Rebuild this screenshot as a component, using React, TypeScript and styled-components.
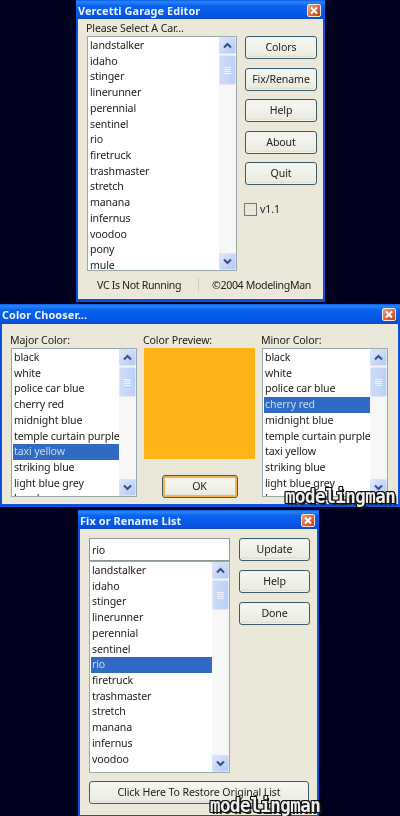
import React from "react";
import styled, { createGlobalStyle } from "styled-components";

const Global = createGlobalStyle`
  html, body { margin: 0; padding: 0; background: #00001f; }
  body { width: 400px; height: 816px; overflow: hidden; }
  * { box-sizing: border-box; }
`;

const Page = styled.div`
  position: relative;
  width: 400px;
  height: 816px;
  overflow: hidden;
  background: #00001f;
  font-family: "Noto Sans", "Liberation Sans", sans-serif;
  font-size: 10.6px;
  letter-spacing: -0.12px;
  color: #22221c;
  filter: blur(0.3px);
`;

const Win = styled.section<{ $left: number; $width: number; $height: number; $top: number }>`
  display: flex;
  flex-direction: column;
  margin-left: ${(p) => p.$left}px;
  margin-top: ${(p) => p.$top}px;
  width: ${(p) => p.$width}px;
  height: ${(p) => p.$height}px;
  background: #0a52dc;
  padding: 0 2px 3px;
`;

const TitleBar = styled.header<{ $h: number }>`
  display: flex;
  align-items: center;
  justify-content: space-between;
  flex: none;
  height: ${(p) => p.$h}px;
  margin: 0 -2px;
  padding: 1px 2px 0 2px;
  background: linear-gradient(#0a5ae6 0%, #2a86f8 10%, #0a62ee 30%, #0658e6 75%, #0a4ccc 100%);
  color: #eaf3ff;
  font-weight: 700;
  font-size: 10.9px;
  letter-spacing: 0.1px;
`;

const Close = styled.span`
  display: flex;
  flex: none;
  margin-right: 2px;
  width: 14px;
  height: 13px;
  border: 1px solid #f4e4dc;
  border-radius: 2px;
  background: linear-gradient(135deg, #f0a080, #d8582c 70%, #c8401c);
`;

const Client = styled.div<{ $pad: string }>`
  display: flex;
  flex-direction: column;
  flex: 1;
  min-height: 0;
  background: #ece8d9;
  padding: ${(p) => p.$pad};
`;

const Row = styled.div<{ $gap: number }>`
  display: flex;
  align-items: flex-start;
  gap: ${(p) => p.$gap}px;
`;

const Col = styled.div<{ $w?: number; $gap?: number; $align?: string }>`
  display: flex;
  flex-direction: column;
  flex: none;
  ${(p) => (p.$w ? `width: ${p.$w}px;` : "")}
  ${(p) => (p.$gap ? `gap: ${p.$gap}px;` : "")}
  ${(p) => (p.$align ? `align-items: ${p.$align};` : "")}
`;

const Label = styled.div`
  height: 15px;
  line-height: 14px;
  margin-left: -1px;
  white-space: nowrap;
`;

const ListBox = styled.div<{ $w: number; $h: number }>`
  display: flex;
  flex: none;
  width: ${(p) => p.$w}px;
  height: ${(p) => p.$h}px;
  background: #fff;
  border: 1px solid #98a8ac;
  overflow: hidden;
`;

const Items = styled.ul`
  flex: 1;
  min-width: 0;
  margin: 0;
  padding: 1px 0 0 1px;
  list-style: none;
  overflow: hidden;
`;

const Item = styled.li<{ $sel?: boolean }>`
  height: 15.72px;
  line-height: 15.72px;
  padding-left: 1px;
  white-space: nowrap;
  background: ${(p) => (p.$sel ? "#316ac5" : "transparent")};
  color: ${(p) => (p.$sel ? "#c8d8ee" : "#22221c")};
`;

const Scroll = styled.div`
  display: flex;
  flex-direction: column;
  flex: none;
  width: 17px;
  background: #f6f7f6;
`;

const ScrollBtn = styled.div`
  display: flex;
  align-items: center;
  justify-content: center;
  flex: none;
  width: 17px;
  height: 17px;
  border-radius: 2px;
  background: linear-gradient(135deg, #dfe8fb, #b4c8f2);
  border: 1px solid #d8e2f6;
`;

const Thumb = styled.div`
  display: flex;
  flex-direction: column;
  align-items: center;
  justify-content: center;
  gap: 1px;
  flex: none;
  width: 17px;
  height: 30px;
  margin-top: 1px;
  border-radius: 2px;
  background: linear-gradient(90deg, #cfdcf8, #bccff6);
  border: 1px solid #e0e8f8;
`;

const Grip = styled.i`
  display: block;
  width: 7px;
  height: 1px;
  background: #eef3fe;
`;

const Spacer = styled.div`
  flex: 1;
`;

const Btn = styled.div<{ $w: number; $h?: number; $def?: boolean }>`
  display: flex;
  align-items: center;
  justify-content: center;
  flex: none;
  width: ${(p) => p.$w}px;
  height: ${(p) => p.$h ?? 23}px;
  padding-bottom: 1px;
  border: 1px solid #3d5a68;
  border-radius: 3px;
  white-space: nowrap;
  background: linear-gradient(#f6f7f2, #ecece2 85%, #d8d6c8);
  box-shadow: ${(p) => (p.$def ? "inset 0 0 0 2px #f2b44e" : "inset 0 0 0 1px #eef2ee")};
`;

const Check = styled.span`
  display: block;
  flex: none;
  width: 13px;
  height: 13px;
  border: 1px solid #6a7a80;
  background: #ece8d9;
`;

const CheckRow = styled.div`
  display: flex;
  align-items: center;
  gap: 3px;
  margin-top: 8.5px;
  margin-left: -1px;
`;

const Status = styled.footer`
  display: grid;
  grid-template-columns: 111px 1fr;
  align-items: center;
  height: 27px;
  margin: 0 -9px 0 0;
  padding-top: 1px;
  letter-spacing: -0.35px;
`;

const StatusCell = styled.div<{ $pl: number; $div?: boolean }>`
  padding-left: ${(p) => p.$pl}px;
  height: 14px;
  line-height: 14px;
  white-space: nowrap;
  ${(p) => (p.$div ? "border-left: 1px solid #d4d0c0;" : "")}
`;

const Input = styled.div`
  display: flex;
  align-items: center;
  flex: none;
  width: 141px;
  height: 23px;
  padding-left: 2px;
  background: #fff;
  border: 1px solid #8a9a9a;
`;

const Preview = styled.div`
  width: 111px;
  height: 111px;
  background: #ffb515;
`;

const OkWrap = styled.div`
  display: flex;
  justify-content: center;
  margin-top: 16px;
`;

const Restore = styled(Btn)`
  margin-top: 8px;
`;

const Watermark = styled.div<{ $x: number; $y: number }>`
  position: absolute;
  left: ${(p) => p.$x}px;
  top: ${(p) => p.$y}px;
  font-family: "DejaVu Sans Mono", monospace;
  font-weight: 700;
  font-size: 17.5px;
  line-height: 18px;
  letter-spacing: -0.5px;
  color: #eeeeee;
  white-space: nowrap;
  transform: scaleY(1.15);
  text-shadow: 1px 0 0 #111, -1px 0 0 #111, 0 1px 0 #111, 0 -1px 0 #111, 1px 1px 0 #111, -1px -1px 0 #111,
    1px -1px 0 #111, -1px 1px 0 #111, 2px 2px 0 #222;
`;

const cars = ["landstalker","idaho","stinger","linerunner","perennial","sentinel","rio","firetruck","trashmaster","stretch","manana","infernus","voodoo","pony","mule"];
const colors = ["black","white","police car blue","cherry red","midnight blue","temple curtain purple","taxi yellow","striking blue","light blue grey","hoods"];

const Chevron = ({ up }: { up?: boolean }) => (
  <svg width="9" height="7" viewBox="0 0 9 7">
    <polyline points={up ? "1,5.5 4.5,2 8,5.5" : "1,1.5 4.5,5 8,1.5"} fill="none" stroke="#34508c" strokeWidth="2" />
  </svg>
);

const CloseBtn = () => (
  <Close>
    <svg width="12" height="11" viewBox="0 0 12 11">
      <path d="M3 2.5 L9 8.5 M9 2.5 L3 8.5" stroke="#fff" strokeWidth="2" />
    </svg>
  </Close>
);

const List = ({ w, h, items, sel }: { w: number; h: number; items: string[]; sel?: string }) => (
  <ListBox $w={w} $h={h}>
    <Items>
      {items.map((t) => (
        <Item key={t} $sel={t === sel}>{t}</Item>
      ))}
    </Items>
    <Scroll>
      <ScrollBtn><Chevron up /></ScrollBtn>
      <Thumb><Grip /><Grip /><Grip /><Grip /></Thumb>
      <Spacer />
      <ScrollBtn><Chevron /></ScrollBtn>
    </Scroll>
  </ListBox>
);

export default function App() {
  return (
    <Page>
      <Global />
      <Win $left={76} $top={0} $width={249} $height={302}>
        <TitleBar $h={19}>Vercetti Garage Editor<CloseBtn /></TitleBar>
        <Client $pad="2px 0 0 9px">
          <Label>Please Select A Car...</Label>
          <Row $gap={8}>
            <List w={150} h={235} items={cars} />
            <Col $gap={8.5}>
              {["Colors", "Fix/Rename", "Help", "About", "Quit"].map((b) => (
                <Btn key={b} $w={72}>{b}</Btn>
              ))}
              <CheckRow><Check />v1.1</CheckRow>
            </Col>
          </Row>
          <Status>
            <StatusCell $pl={10}>VC Is Not Running</StatusCell>
            <StatusCell $pl={13} $div>©2004 ModelingMan</StatusCell>
          </Status>
        </Client>
      </Win>

      <Win $left={0} $top={2} $width={400} $height={203}>
        <TitleBar $h={20}>Color Chooser...<CloseBtn /></TitleBar>
        <Client $pad="9px 0 0 9px">
          <Row $gap={7}>
            <Col $w={126}>
              <Label>Major Color:</Label>
              <List w={126} h={149} items={colors} sel="taxi yellow" />
            </Col>
            <Col $w={111}>
              <Label>Color Preview:</Label>
              <Preview />
              <OkWrap><Btn $w={76} $def>OK</Btn></OkWrap>
            </Col>
            <Col $w={126}>
              <Label>Minor Color:</Label>
              <List w={126} h={149} items={colors} sel="cherry red" />
            </Col>
          </Row>
        </Client>
      </Win>

      <Win $left={78} $top={3} $width={241} $height={308}>
        <TitleBar $h={19}>Fix or Rename List<CloseBtn /></TitleBar>
        <Client $pad="9px 0 0 9px">
          <Row $gap={9}>
            <Col $w={141}>
              <Input>rio</Input>
              <List w={141} h={212} items={cars.slice(0, 13)} sel="rio" />
            </Col>
            <Col $gap={9}>
              {["Update", "Help", "Done"].map((b) => (
                <Btn key={b} $w={71}>{b}</Btn>
              ))}
            </Col>
          </Row>
          <Restore $w={220}>Click Here To Restore Original List</Restore>
        </Client>
      </Win>

      <Watermark $x={285} $y={487}>modelingman</Watermark>
      <Watermark $x={210} $y={796}>modelingman</Watermark>
    </Page>
  );
}
